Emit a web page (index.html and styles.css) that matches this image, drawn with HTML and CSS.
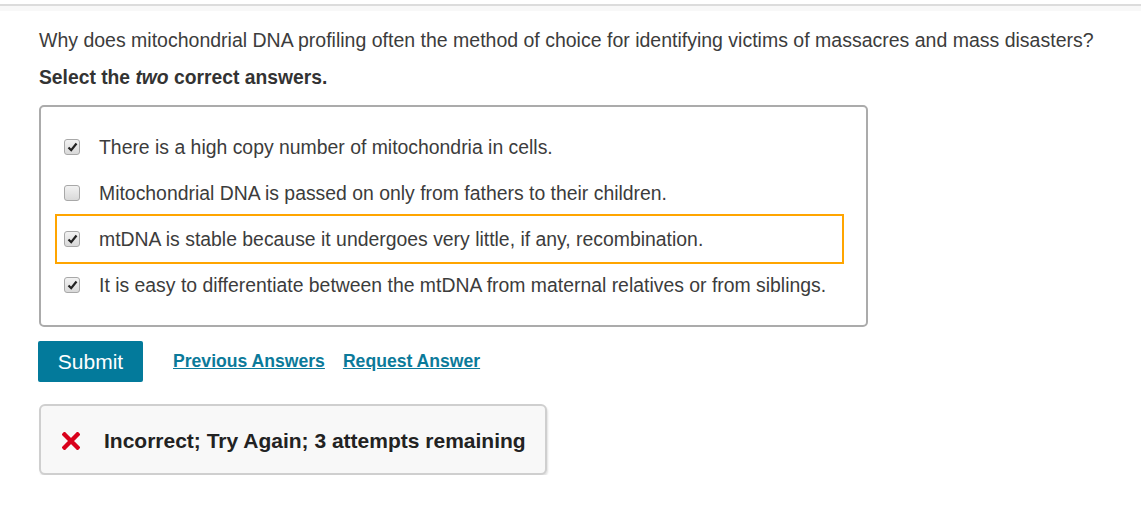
FILE: index.html
```html
<!DOCTYPE html>
<html>
<head>
<meta charset="utf-8">
<link rel="stylesheet" href="styles.css">
</head>
<body>
<div class="topbar"></div>
<div class="content">
  <p class="question">Why does mitochondrial DNA profiling often the method of choice for identifying victims of massacres and mass disasters?</p>
  <p class="instruction">Select the <em>two</em> correct answers.</p>
  <div class="answers">
    <label class="option"><span class="box checked"><svg width="11" height="10" viewBox="0 0 11 10"><path d="M1.5 5.5 L4.2 8.2 L9.5 1.5" fill="none" stroke="#222" stroke-width="2.2"/></svg></span><span>There is a high copy number of mitochondria in cells.</span></label>
    <label class="option"><span class="box"></span><span>Mitochondrial DNA is passed on only from fathers to their children.</span></label>
    <label class="option focused"><span class="box checked"><svg width="11" height="10" viewBox="0 0 11 10"><path d="M1.5 5.5 L4.2 8.2 L9.5 1.5" fill="none" stroke="#222" stroke-width="2.2"/></svg></span><span>mtDNA is stable because it undergoes very little, if any, recombination.</span></label>
    <label class="option"><span class="box checked"><svg width="11" height="10" viewBox="0 0 11 10"><path d="M1.5 5.5 L4.2 8.2 L9.5 1.5" fill="none" stroke="#222" stroke-width="2.2"/></svg></span><span>It is easy to differentiate between the mtDNA from maternal relatives or from siblings.</span></label>
  </div>
  <div class="actions">
    <button class="submit">Submit</button>
    <a class="link" href="#">Previous Answers</a>
    <a class="link" href="#">Request Answer</a>
  </div>
  <div class="feedback">
    <svg class="xicon" width="18" height="18" viewBox="0 0 18 18"><path d="M2.5 2.5 L15.5 15.5 M15.5 2.5 L2.5 15.5" stroke="#d9001b" stroke-width="4.4" stroke-linecap="square"/></svg>
    <span>Incorrect; Try Again; 3 attempts remaining</span>
  </div>
</div>
</body>
</html>
```
FILE: styles.css
```css
html, body {
  margin: 0;
  padding: 0;
  background: #fff;
  font-family: "Liberation Sans", Arial, sans-serif;
  color: #333;
}
.topbar {
  margin-top: 4px;
  height: 2px;
  background: #dcdcdc;
  border-bottom: 5px solid #f8f8f8;
}
.content {
  padding: 0 39px;
}
.question {
  margin: 17px 0 0;
  font-size: 19.5px;
  line-height: 24px;
  color: #3c3c3c;
}
.instruction {
  margin: 15px 0 0;
  font-size: 19.3px;
  line-height: 22px;
  font-weight: bold;
  color: #333;
}
.answers {
  margin-top: 16px;
  width: 811px;
  border: 2px solid #ababab;
  border-radius: 5px;
  padding: 17px 0 17px 14px;
}
.option {
  display: flex;
  align-items: center;
  height: 46px;
  width: 789px;
  box-sizing: border-box;
  padding-left: 7px;
  font-size: 19.4px;
  color: #3c3c3c;
  border: 2px solid transparent;
}
.option.focused {
  border-color: #ffa500;
  height: 50px;
  margin: -2px 0;
}
.box {
  width: 14px;
  height: 14px;
  margin: 0 19px 0 0;
  border: 1px solid #a8a8a8;
  border-radius: 3px;
  background: linear-gradient(#f2f2f2, #d9d9d9);
  display: flex;
  align-items: center;
  justify-content: center;
  flex: none;
}
.actions {
  display: flex;
  align-items: center;
  margin-top: 14px;
}
.submit {
  width: 105px;
  height: 41px;
  margin-left: -1px;
  background: #037a9b;
  color: #fff;
  border: none;
  border-radius: 2px;
  font-family: "Liberation Sans", Arial, sans-serif;
  font-size: 21px;
}
.link {
  font-size: 17.6px;
  font-weight: bold;
  color: #0b7a9a;
  text-decoration: underline;
  margin-left: 30px;
}
.link + .link { margin-left: 18px; }
.feedback {
  margin-top: 22px;
  width: 508px;
  height: 71px;
  box-sizing: border-box;
  display: flex;
  align-items: center;
  background: #f8f8f8;
  border: 2px solid #cfcfcf;
  border-radius: 6px;
  box-shadow: 1px 2px 2px rgba(0,0,0,0.12);
  padding: 3px 0 0 21px;
  font-size: 21px;
  font-weight: bold;
  color: #222;
}
.xicon { margin-right: 24px; }
```
